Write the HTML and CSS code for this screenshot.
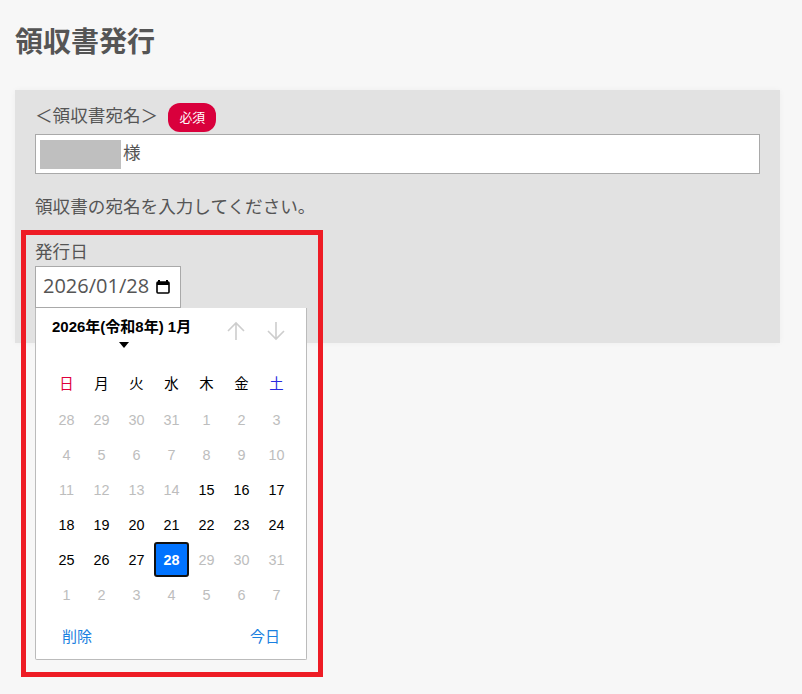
FILE: index.html
```html
<!DOCTYPE html>
<html lang="ja">
<head>
    <meta charset="UTF-8">
    <title>領収書発行</title>
    <link rel="stylesheet" href="styles.css">
</head>
<body>
    <h1 class="page-title">領収書発行</h1>

    <!-- Form panel -->
    <div class="panel">
        <div class="label-row">
            <span class="label-text">＜領収書宛名＞</span>
            <span class="required">必須</span>
        </div>
        <div class="name-input">
            <span class="mask"></span>
            <span class="honorific">様</span>
        </div>
        <p class="hint">領収書の宛名を入力してください。</p>

        <div class="date-field">
            <div class="date-label">発行日</div>
            <div class="date-input">
                <span class="date-value">2026/01/28</span>
                <svg class="cal-icon" width="14" height="14" viewBox="0 0 14 14">
                    <path d="M3 0v2M11 0v2" stroke="#000" stroke-width="2" fill="none"/>
                    <rect x="1" y="2" width="12" height="11" rx="1" stroke="#000" stroke-width="1.6" fill="none"/>
                    <rect x="1" y="2" width="12" height="3" fill="#000"/>
                </svg>
            </div>

            <!-- Date picker popup -->
            <div class="picker">
                <div class="picker-head">
                    <div class="month-select">
                        <div class="month-text">2026年(令和8年) 1月</div>
                        <div class="month-arrow"></div>
                    </div>
                    <div class="arrows">
                        <svg width="20" height="20" viewBox="0 0 20 20"><path d="M10 19V2M2 10l8-8 8 8" stroke="#cdcdcd" stroke-width="1.6" fill="none"/></svg>
                        <svg width="20" height="20" viewBox="0 0 20 20"><path d="M10 1v17M2 10l8 8 8-8" stroke="#cdcdcd" stroke-width="1.6" fill="none"/></svg>
                    </div>
                </div>
                <div class="days">
                    <div class="wd sun">日</div><div class="wd">月</div><div class="wd">火</div><div class="wd">水</div><div class="wd">木</div><div class="wd">金</div><div class="wd sat">土</div>
                    <div class="off">28</div><div class="off">29</div><div class="off">30</div><div class="off">31</div><div class="off">1</div><div class="off">2</div><div class="off">3</div>
                    <div class="off">4</div><div class="off">5</div><div class="off">6</div><div class="off">7</div><div class="off">8</div><div class="off">9</div><div class="off">10</div>
                    <div class="off">11</div><div class="off">12</div><div class="off">13</div><div class="off">14</div><div>15</div><div>16</div><div>17</div>
                    <div>18</div><div>19</div><div>20</div><div>21</div><div>22</div><div>23</div><div>24</div>
                    <div>25</div><div>26</div><div>27</div><div class="selected">28</div><div class="off">29</div><div class="off">30</div><div class="off">31</div>
                    <div class="off">1</div><div class="off">2</div><div class="off">3</div><div class="off">4</div><div class="off">5</div><div class="off">6</div><div class="off">7</div>
                </div>
                <div class="picker-foot">
                    <span>削除</span>
                    <span>今日</span>
                </div>
            </div>

            <!-- Red highlight frame -->
            <div class="highlight"></div>
        </div>
    </div>
</body>
</html>
```

FILE: styles.css
```css
body {
    font-family: "Noto Sans CJK JP", "Noto Sans", sans-serif;
    margin: 0;
    padding: 0 22px 0 15px;
    min-height: 694px;
    box-sizing: border-box;
    background-color: #f7f7f7;
    color: #555;
}

.page-title {
    font-size: 28px;
    line-height: 40px;
    font-weight: bold;
    margin: 0;
    padding: 20px 0 30px;
    color: #555;
}

.panel {
    background-color: #e2e2e2;
    padding: 11px 20px 35px;
    box-shadow: 0 0 6px rgba(0, 0, 0, 0.04);
}

.label-row {
    display: flex;
    align-items: center;
    height: 33px;
}

.label-text {
    font-size: 17.6px;
    line-height: 28px;
    margin-top: -6px;
    margin-right: 10px;
}

.required {
    background-color: #d9003c;
    color: #fff;
    font-size: 12.8px;
    width: 48px;
    height: 29px;
    line-height: 27px;
    border-radius: 12px;
    text-align: center;
}

.name-input {
    display: flex;
    align-items: center;
    height: 38px;
    padding-left: 4px;
    background-color: #fff;
    border: 1px solid #a9a9a9;
    font-size: 17.6px;
}

.mask {
    width: 81px;
    height: 29px;
    margin-right: 2px;
    background-color: #bfbfbf;
}

.honorific {
    padding-bottom: 6px;
}

.hint {
    font-size: 17.6px;
    line-height: 24px;
    margin: 20px 0 0;
}

.date-field {
    position: relative;
    margin-top: 21px;
}

.date-label {
    font-size: 17.6px;
    line-height: 24px;
}

.date-input {
    display: flex;
    align-items: center;
    width: 146px;
    height: 42px;
    margin-top: 3px;
    padding-left: 7px;
    box-sizing: border-box;
    background-color: #fff;
    border: 1px solid #a9a9a9;
    font-size: 20px;
    font-family: "Open Sans", sans-serif;
}

.date-value {
    padding-bottom: 4px;
}

.cal-icon {
    margin-left: 7px;
}

.picker {
    position: absolute;
    left: 0;
    top: 69px;
    width: 270px;
    height: 351px;
    background-color: #fff;
    border: 1px solid #bbb;
    border-top: none;
    border-radius: 0 0 2px 2px;
    font-family: "Liberation Sans", "Noto Sans CJK JP", sans-serif;
    color: #000;
}

.picker-head {
    display: flex;
    justify-content: space-between;
    height: 55px;
}

.month-select {
    padding: 9px 0 0 16px;
}

.month-text {
    font-size: 15px;
    font-weight: bold;
    line-height: 20px;
}

.month-arrow {
    width: 0;
    height: 0;
    margin: 5px 0 0 67px;
    border-left: 5px solid transparent;
    border-right: 5px solid transparent;
    border-top: 6px solid #000;
}

.arrows {
    display: flex;
    gap: 20px;
    padding: 13px 20px 0 0;
}

.days {
    display: grid;
    grid-template-columns: repeat(7, 35px);
    grid-template-rows: 39px;
    grid-auto-rows: 35px;
    padding-left: 13px;
    font-size: 14.4px;
}

.days div {
    display: flex;
    align-items: center;
    justify-content: center;
    box-sizing: border-box;
}

.days .off {
    color: #bdbdbd;
}

.days .sun {
    color: #e0003c;
}

.days .sat {
    color: #2a2adf;
}

.days .selected {
    background-color: #0073ff;
    color: #fff;
    font-weight: bold;
    border: 2px solid #111;
    border-radius: 3px;
}

.picker-foot {
    display: flex;
    justify-content: space-between;
    padding: 13px 26px 0;
    font-size: 15px;
    color: #1a80e0;
}

.highlight {
    position: absolute;
    left: -14px;
    top: -9px;
    width: 292px;
    height: 437px;
    border: 5px solid #ee1c25;
    pointer-events: none;
}
```
